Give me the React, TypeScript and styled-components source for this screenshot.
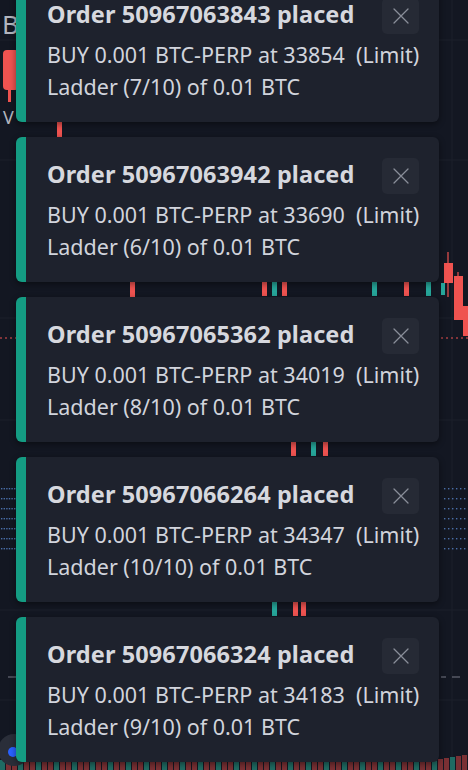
import { createGlobalStyle } from "styled-components";
import styled from "styled-components";

const GlobalStyle = createGlobalStyle`
  html, body {
    margin: 0;
    padding: 0;
    background: #131722;
    overflow: hidden;
  }
  body {
    font-family: "Noto Sans", "Open Sans", sans-serif;
  }
`;

type Order = {
  id: string;
  price: number;
  step: number;
};

const orders: Order[] = [
  { id: "50967063843", price: 33854, step: 7 },
  { id: "50967063942", price: 33690, step: 6 },
  { id: "50967065362", price: 34019, step: 8 },
  { id: "50967066264", price: 34347, step: 10 },
  { id: "50967066324", price: 34183, step: 9 },
];

const up = "#26a69a";
const down = "#ef5350";

// candles peeking between the toasts: x, top, height, colour
const candles: [number, number, number, string][] = [
  [57, 122, 15, down],
  [130, 282, 15, down],
  [262, 282, 14, down],
  [272, 282, 14, up],
  [282, 282, 14, down],
  [372, 282, 14, up],
  [404, 282, 14, down],
  [426, 282, 14, up],
  [291, 442, 14, down],
  [311, 442, 14, up],
  [323, 442, 14, down],
  [272, 601, 15, up],
  [293, 601, 15, down],
  [301, 601, 15, down],
];

const ChartBackdrop = () => {
  const dots: JSX.Element[] = [];
  for (let r = 0; r < 7; r++) {
    for (let c = 0; c < 6; c++) {
      dots.push(<rect key={`l${r}-${c}`} x={1 + c * 2.6} y={488 + r * 10} width={1.4} height={1.4} fill="#4a6ea8" />);
      dots.push(<rect key={`r${r}-${c}`} x={444 + c * 4} y={488 + r * 10} width={1.4} height={1.4} fill="#4a6ea8" />);
    }
  }
  const vols: JSX.Element[] = [];
  for (let i = 0; i < 78; i++) {
    const h = 10 + ((i * 37) % 9);
    vols.push(
      <rect key={`v${i}`} x={i * 6} y={770 - h} width={5} height={h} fill={i % 3 === 0 ? "#1f6b63" : "#7a3034"} />
    );
  }
  return (
    <Backdrop width="468" height="770" viewBox="0 0 468 770">
      {[40, 160, 318, 420, 610, 700].map((y) => (
        <line key={y} x1="0" x2="468" y1={y} y2={y} stroke="#1c202b" strokeWidth="1" />
      ))}
      <line x1="452" x2="452" y1="0" y2="770" stroke="#1c202b" />
      <text x="2" y="34" fill="#b2b5be" fontSize="26" fontFamily="Noto Sans, sans-serif">
        B
      </text>
      <rect x="3" y="50" width="16" height="40" rx="4" fill={down} />
      <rect x="8" y="90" width="3" height="12" fill={down} />
      <text x="3" y="124" fill="#b2b5be" fontSize="18" fontFamily="Noto Sans, sans-serif">
        V
      </text>
      <line x1="0" x2="16" y1="338" y2="338" stroke={down} strokeDasharray="2 3" />
      <line x1="441" x2="468" y1="338" y2="338" stroke={down} strokeDasharray="2 3" />
      {dots}
      <line x1="8" x2="16" y1="677" y2="677" stroke="#787b86" />
      <line x1="441" x2="446" y1="677" y2="677" stroke="#787b86" />
      <line x1="452" x2="460" y1="677" y2="677" stroke="#787b86" />
      {vols}
      {/* right side candles */}
      <line x1="448" x2="448" y1="252" y2="297" stroke={down} strokeWidth="1.2" />
      <rect x="444" y="263" width="9" height="20" fill={down} />
      <line x1="458" x2="458" y1="272" y2="318" stroke={down} strokeWidth="1.2" />
      <rect x="454" y="276" width="9" height="44" fill={down} />
      <rect x="463" y="306" width="6" height="30" fill={down} />
      <rect x="441" y="283" width="4" height="12" fill={up} />
      {candles.map(([x, y, h, col], i) => (
        <rect key={i} x={x} y={y} width={5} height={h} fill={col} />
      ))}
      <circle cx="14" cy="750" r="16" fill="#2a2e39" />
      <circle cx="13" cy="752" r="5" fill="#2962ff" />
    </Backdrop>
  );
};

const CloseIcon = () => (
  <svg width="18" height="18" viewBox="0 0 18 18" fill="none">
    <path d="M2 2L16 16M16 2L2 16" stroke="#8a8e99" strokeWidth="1.3" strokeLinecap="round" />
  </svg>
);

const App = () => (
  <Screen>
    <GlobalStyle />
    <ChartBackdrop />
    <Stack>
      {orders.map((o) => (
        <Toast key={o.id}>
          <Accent />
          <Content>
            <Header>
              <Title>Order {o.id} placed</Title>
              <CloseButton aria-label="close">
                <CloseIcon />
              </CloseButton>
            </Header>
            <Line>{`BUY 0.001 BTC-PERP at ${o.price}  (Limit)`}</Line>
            <Line>{`Ladder (${o.step}/10) of 0.01 BTC`}</Line>
          </Content>
        </Toast>
      ))}
    </Stack>
  </Screen>
);

const Screen = styled.div`
  position: relative;
  width: 468px;
  height: 770px;
  overflow: hidden;
  background: #131722;
`;

const Backdrop = styled.svg`
  position: absolute;
  inset: 0;
`;

const Stack = styled.div`
  position: relative;
  display: flex;
  flex-direction: column;
  gap: 15px;
  width: 423px;
  margin-top: -23px;
  margin-left: 16px;
`;

const Toast = styled.div`
  display: flex;
  height: 145px;
  background: #1e222d;
  border-radius: 6px;
  box-shadow: 0 2px 6px rgba(0, 0, 0, 0.45);
  overflow: hidden;
`;

const Accent = styled.div`
  width: 10px;
  flex-shrink: 0;
  background: #149c83;
`;

const Content = styled.div`
  flex: 1;
  padding: 21px 20px 0 21px;
  color: #d1d4dc;
`;

const Header = styled.div`
  display: flex;
  align-items: center;
  justify-content: space-between;
  height: 36px;
  margin-bottom: 5px;
`;

const Title = styled.div`
  font-size: 23.5px;
  font-weight: 700;
  letter-spacing: 0.1px;
  padding-bottom: 5px;
  color: #d6d8de;
`;

const CloseButton = styled.button`
  display: flex;
  align-items: center;
  justify-content: center;
  width: 37px;
  height: 36px;
  padding: 0;
  border: none;
  border-radius: 5px;
  background: #262a35;
`;

const Line = styled.div`
  font-size: 21.5px;
  line-height: 32px;
  white-space: pre;
  color: #d1d4dc;
`;

export default App;
